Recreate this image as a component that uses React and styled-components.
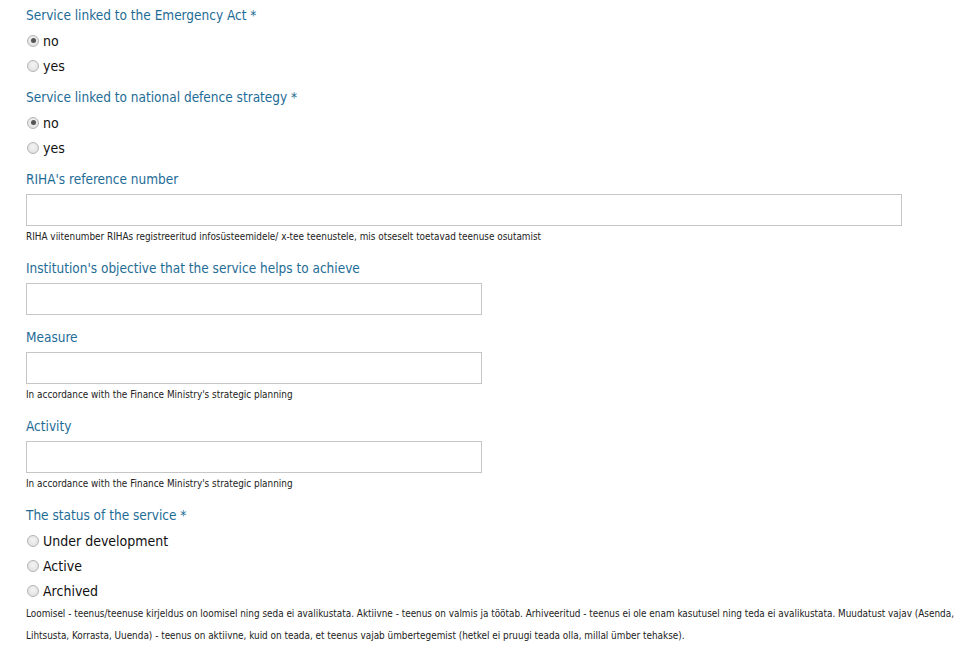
import React from 'react';
import styled, { createGlobalStyle } from 'styled-components';

const Global = createGlobalStyle`
  body {
    margin: 0;
    background: #fff;
    font-family: 'DejaVu Sans', 'Liberation Sans', sans-serif;
    font-stretch: condensed;
    color: #222;
  }
`;

const Form = styled.div`
  padding: 5px 0 0 26px;
  width: 930px;
`;

const Group = styled.div`
  margin-bottom: ${p => p.$gap ?? 12}px;
`;

const Label = styled.div`
  font-size: 13.5px;
  line-height: 20px;
  color: #1e6c96;
  margin-bottom: ${p => p.$radio ? 3 : 5}px;
`;

const RadioRow = styled.label`
  display: flex;
  align-items: center;
  height: 25px;
  font-size: 14px;
  color: #111;
`;

const Radio = styled.input.attrs({ type: 'radio' })`
  appearance: none;
  margin: 0 4px 0 1px;
  width: 12px;
  height: 12px;
  border-radius: 50%;
  border: 1px solid #b4b4b4;
  background: radial-gradient(circle at 50% 40%, #f4f4f4 0%, #dcdcdc 100%);
  position: relative;

  &:checked::after {
    content: '';
    position: absolute;
    left: 2.5px;
    top: 2.5px;
    width: 5px;
    height: 5px;
    border-radius: 50%;
    background: #555;
  }
`;

const Input = styled.input`
  display: block;
  box-sizing: border-box;
  width: ${p => p.$wide ? 876 : 456}px;
  height: 32px;
  border: 1px solid #c6c6c6;
  background: #fff;
  outline: none;
`;

const Help = styled.div`
  font-size: 9.9px;
  line-height: 19px;
  margin-top: 1px;
  color: #222;
`;

const Note = styled.div`
  font-size: 9.9px;
  line-height: 22px;
  color: #222;
  width: 940px;
`;

const RadioGroup = ({ label, name, options, checked }) => (
  <Group $gap={9}>
    <Label $radio>{label}</Label>
    {options.map(o => (
      <RadioRow key={o}>
        <Radio name={name} defaultChecked={o === checked} />
        {o}
      </RadioRow>
    ))}
  </Group>
);

const Field = ({ label, wide, help }) => (
  <Group>
    <Label>{label}</Label>
    <Input $wide={wide} />
    {help && <Help>{help}</Help>}
  </Group>
);

const finance = "In accordance with the Finance Ministry's strategic planning";

export default function App() {
  return (
    <>
      <Global />
      <Form>
        <RadioGroup label="Service linked to the Emergency Act *" name="emergency" options={['no', 'yes']} checked="no" />
        <RadioGroup label="Service linked to national defence strategy *" name="defence" options={['no', 'yes']} checked="no" />
        <Field label="RIHA's reference number" wide help="RIHA viitenumber RIHAs registreeritud infosüsteemidele/ x-tee teenustele, mis otseselt toetavad teenuse osutamist" />
        <Field label="Institution's objective that the service helps to achieve" />
        <Field label="Measure" help={finance} />
        <Field label="Activity" help={finance} />
        <Group $gap={0}>
          <Label $radio>The status of the service *</Label>
          {['Under development', 'Active', 'Archived'].map(o => (
            <RadioRow key={o}>
              <Radio name="status" />
              {o}
            </RadioRow>
          ))}
          <Note>
            Loomisel - teenus/teenuse kirjeldus on loomisel ning seda ei avalikustata. Aktiivne - teenus on valmis ja töötab. Arhiveeritud - teenus ei ole enam kasutusel ning teda ei avalikustata. Muudatust vajav (Asenda, Lihtsusta, Korrasta, Uuenda) - teenus on aktiivne, kuid on teada, et teenus vajab ümbertegemist (hetkel ei pruugi teada olla, millal ümber tehakse).
          </Note>
        </Group>
      </Form>
    </>
  );
}
